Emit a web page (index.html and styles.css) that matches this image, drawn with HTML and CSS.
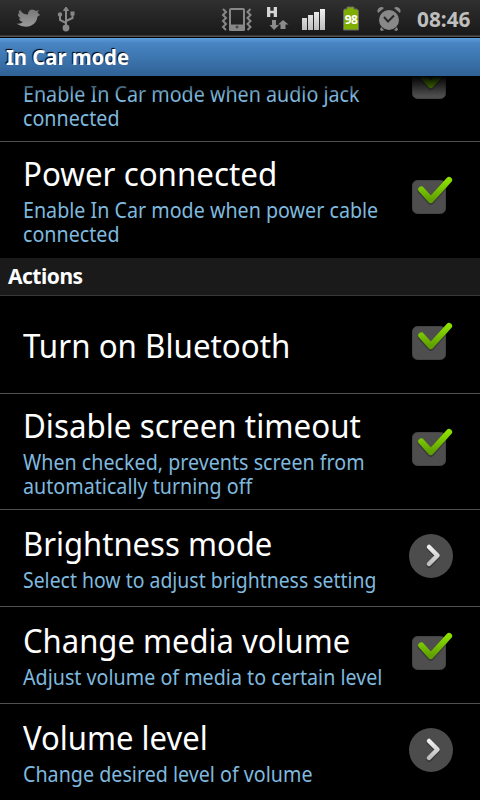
FILE: index.html
```html
<!DOCTYPE html>
<html lang="en">
<head>
<meta charset="utf-8">
<title>In Car mode</title>
<link rel="stylesheet" href="styles.css">
</head>
<body>
<svg class="defs" width="0" height="0" aria-hidden="true">
  <defs>
    <linearGradient id="green" x1="0" y1="0" x2="0" y2="1"><stop offset="0" stop-color="#8be000"/><stop offset="1" stop-color="#609f00"/></linearGradient>
    <linearGradient id="silver" x1="0" y1="0" x2="0" y2="1"><stop offset="0" stop-color="#f0f0f0"/><stop offset="1" stop-color="#bdbdbd"/></linearGradient>
    <linearGradient id="grey" x1="0" y1="0" x2="0" y2="1"><stop offset="0" stop-color="#777"/><stop offset="1" stop-color="#9a9a9a"/></linearGradient>
    <symbol id="check" viewBox="0 0 44 44">
      <rect x="3.5" y="6.500" width="33" height="33" rx="5" fill="#4e4e4e" stroke="#444"/>
      <path d="M12.300 17L21.800 27.500L35 12" fill="none" stroke="#222" stroke-opacity=".45" stroke-width="7" stroke-linecap="round" stroke-linejoin="round"/>
      <path d="M12.300 15.500L21.800 26L40 6" fill="none" stroke="url(#green)" stroke-width="6.200" stroke-linecap="round" stroke-linejoin="round"/>
    </symbol>
    <symbol id="more" viewBox="0 0 44 46">
      <circle cx="22" cy="23" r="22" fill="#4c4c4c"/>
      <path d="M20 15 L28.500 23.500 L20 32.500" fill="none" stroke="#333" stroke-width="5" stroke-linecap="round" stroke-linejoin="round"/>
      <path d="M20 14 L28.500 22.500 L20 31" fill="none" stroke="url(#silver)" stroke-width="4.500" stroke-linecap="round" stroke-linejoin="round"/>
    </symbol>
  </defs>
</svg>
<div class="screen">
  <header class="status">
    <svg class="status-icons" viewBox="0 0 405 38" width="405" height="38">
      <path transform="translate(0 .5)" fill="url(#grey)" d="M16 23 Q20 24 23 21.500 Q19.500 20.500 19 18 L21 18 Q17.500 16 18 13 L20 14 Q17.500 11.500 20 9.500 Q23 14 28 14 Q28 9.500 32 9 Q34.500 9 36 10.500 L39 9.500 L37.500 12 L40 14.500 L37.500 16 Q37 21 33 24 Q26 29 16 23Z"/>
      <g fill="#888" stroke="#888" stroke-width="2"><path d="M66 28V10M66 23L60 20V15M66 21L72.500 18V13" fill="none"/><path d="M66 7L63.500 10.500H68.500Z" stroke-width="1"/><circle cx="66" cy="28" r="2.400"/><circle cx="60" cy="14.500" r="1.200"/><path d="M71.500 12.500h2v2h-2z"/></g>
      <g fill="none" stroke="#888" stroke-width="2"><path d="M223 9L226 12L223 15L226 18L223 21L226 24L223 27L226 30M250.500 9L247.500 12L250.500 15L247.500 18L250.500 21L247.500 24L250.500 27L247.500 30"/><rect x="230" y="9" width="14" height="21" rx="1"/><path d="M229 27.500H245" stroke-width="6"/><circle cx="237" cy="27" r="1" stroke="#333" stroke-width="1"/></g>
      <path d="M267 7h3.300v3.700h3.400V7h3.300v10h-3.300v-3.700h-3.400V17H267z" fill="#d4d4d4"/>
      <path d="M272 20h4v5h3L274 30L269.500 25H272zM280.500 29h5v-4.500h3L283 20L278 24.500h2.500z" fill="#8b8b8b"/>
      <path d="M302 18h5v12h-5zM308 15h5v15h-5zM314 12h5v18h-5zM320 9h5v21h-5z" fill="url(#silver)"/>
      <path d="M347 7h7v2h3q2 1 1.500 4v17h-15V13q-.5-3 1-4h2.500z" fill="#7fae00" stroke="#666"/>
      <text x="351" y="24" class="battery-text">98</text>
      <g fill="#888"><circle cx="389" cy="20" r="10"/><path d="M378 13a4 4 0 0 1 6-5zM400 13a4 4 0 0 0-6-5zM381 27l3 3-2 1-2-1zM397 27l-3 3 2 1 2-1z"/></g>
      <path d="M384 17L388 21.500L394 15.500" fill="none" stroke="#282828" stroke-width="2"/>
    </svg>
    <span class="clock">08:46</span>
  </header>
  <h1 class="titlebar"><span class="fit">In Car mode</span></h1>
  <main class="list">
    <section class="row row-clipped"><div class="copy"><p class="summary">Enable In Car mode when audio jack<br>connected</p></div><svg class="check"><use href="#check"/></svg></section>
    <section class="row row-tall row-end"><div class="copy"><h2 class="name">Power connected</h2><p class="summary">Enable In Car mode when power cable<br>connected</p></div><svg class="check"><use href="#check"/></svg></section>
    <h3 class="category">Actions</h3>
    <section class="row row-single"><div class="copy"><h2 class="name">Turn on Bluetooth</h2></div><svg class="check"><use href="#check"/></svg></section>
    <section class="row row-tall"><div class="copy"><h2 class="name">Disable screen timeout</h2><p class="summary">When checked, prevents screen from<br>automatically turning off</p></div><svg class="check"><use href="#check"/></svg></section>
    <section class="row"><div class="copy"><h2 class="name tight">Brightness mode</h2><p class="summary tight">Select how to adjust brightness setting</p></div><svg class="more"><use href="#more"/></svg></section>
    <section class="row"><div class="copy"><h2 class="name tight">Change media volume</h2><p class="summary">Adjust volume of media to certain level</p></div><svg class="check"><use href="#check"/></svg></section>
    <section class="row"><div class="copy"><h2 class="name tight">Volume level</h2><p class="summary">Change desired level of volume</p></div><svg class="more"><use href="#more"/></svg></section>
  </main>
</div>
</body>
</html>
```
FILE: styles.css
```css
* { box-sizing: border-box; margin: 0; padding: 0; }
body { background: #000; color: #fff; font-family: "Noto Sans", "Open Sans", sans-serif; }
.defs { position: absolute; }
.screen { width: 480px; height: 800px; overflow: hidden; background: #000; }
.status { height: 38px; display: flex; background: linear-gradient(#303030, #191919 35px, #555 36px, #555 37px, #000 37px); }
.status-icons { flex: none; }
.battery-text { font-size: 12px; font-weight: 700; fill: #fff; text-anchor: middle; letter-spacing: -.5px; }
.clock { margin-left: 12px; font-size: 21px; line-height: 39px; font-weight: 700; color: #bebebe; transform: scaleX(.99); transform-origin: left; }
.titlebar { height: 38px; padding-left: 6px; background: linear-gradient(#5d9ddd, #4885c3 5px, #2f6296); font-size: 22px; line-height: 36px; font-weight: 700; text-shadow: -1px -1px 1px #000; }
.fit { display: inline-block; transform: scaleX(.92); transform-origin: left; }
.list { position: relative; height: 724px; overflow: hidden; }
.list::before { content: ""; position: absolute; z-index: 1; top: 0; left: 0; right: 0; height: 20px; background: linear-gradient(#000, transparent); }
.row { height: 97px; padding: 0 27px 0 23px; display: flex; align-items: center; justify-content: space-between; border-bottom: 1px solid #505050; }
.row:last-child { border-bottom-color: transparent; }
.row-single { height: 98px; }
.row-tall { height: 116px; }
.row-end { border-bottom-color: transparent; }
.row-clipped { height: 66px; padding-bottom: 12px; align-items: flex-end; }
.copy { white-space: nowrap; flex: 1; min-width: 0; padding-bottom: 2px; }
.row-single .copy, .row-clipped .copy { padding-bottom: 0; }
.name { font-size: 33.500px; line-height: 40px; font-weight: 400; transform: scaleX(.935); transform-origin: left; }
.name.tight { transform: scaleX(.926); }
.summary { width: 370px; font-size: 22px; line-height: 24px; color: #7fb9df; transform: scaleX(.895); transform-origin: left; }
.summary.tight { transform: scaleX(.883); }
.name + .summary { margin-top: 4px; }
.check { width: 44px; height: 44px; flex: none; margin-bottom: 7px; }
.row-clipped .check { margin-bottom: 26px; }
.row-single .check { margin-bottom: 5px; }
.more { width: 44px; height: 46px; flex: none; margin-bottom: 4px; }
.category { height: 38px; padding-left: 8px; background: #1a1a1a; border-bottom: 1px solid #383838; font-size: 21px; line-height: 37px; font-weight: 700; letter-spacing: -.5px; }
```
